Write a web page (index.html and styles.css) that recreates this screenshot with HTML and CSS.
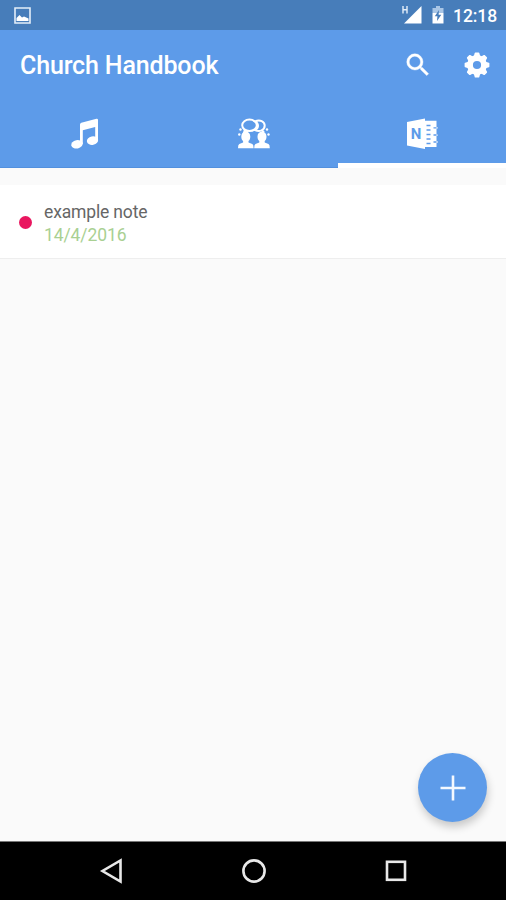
FILE: index.html
```html
<!DOCTYPE html>
<html lang="en">
<head>
    <meta charset="UTF-8">
    <meta name="viewport" content="width=device-width, initial-scale=1.0">
    <title>Church Handbook</title>
    <link rel="stylesheet" href="styles.css">
</head>
<body>
    <div class="status-bar">
        <svg class="picture-icon" width="17" height="17" viewBox="0 0 17 17">
            <path d="M1 1h15v15H1z" fill="none" stroke="#e4eef9" stroke-width="1.6"/>
            <path d="M2.5 14v-3L5.500 8l2.500 2.500 2-1 4.500 2V14z" fill="#fff"/>
        </svg>
        <div class="status-right">
            <svg width="20" height="18" viewBox="0 0 20 18">
                <path d="M2 0v7.500M6 0v7.500M2 3.700h4" stroke="#e4eef9" stroke-width="1.4"/>
                <path d="M20.500 0v17.500H3z" fill="#fff"/>
            </svg>
            <svg class="battery-icon" width="12" height="18" viewBox="0 0 12 18">
                <path d="M4 0h4v2h3.500v5H.5V2H4z" fill="#a9c6e6"/>
                <path d="M.5 7h11v10.500H.5z" fill="#fff"/>
                <path d="M7 4L2.800 10.200h2.600L5 15l4.300-6.200H6.600z" fill="#477dba"/>
            </svg>
            <span class="clock">12:18</span>
        </div>
    </div>

    <header class="header">
        <div class="toolbar">
            <h1>Church Handbook</h1>
            <div class="actions">
                <svg width="30" height="30" viewBox="0 0 24 24">
                    <path fill="#fff" stroke="#fff" stroke-width=".3" d="M15.5 14h-.79l-.28-.27A6.47 6.47 0 0 0 16 9.5 6.5 6.5 0 1 0 9.5 16c1.61 0 3.09-.59 4.23-1.57l.27.28v.79l5 4.99L20.49 19l-4.99-5zm-6 0a4.5 4.5 0 1 1 0-9 4.5 4.5 0 0 1 0 9z"/>
                </svg>
                <svg width="30" height="30" viewBox="-15 -15 30 30">
                    <g fill="#fff">
                        <circle r="7" fill="none" stroke="#fff" stroke-width="5.8"/>
                        <path id="tooth" d="M-3.300-8.500l1-3.400q.2-.5.7-.5h3.200q.5 0 .7.500l1 3.400z"/>
                        <use href="#tooth" transform="rotate(45)"/>
                        <use href="#tooth" transform="rotate(90)"/>
                        <use href="#tooth" transform="rotate(135)"/>
                        <use href="#tooth" transform="rotate(180)"/>
                        <use href="#tooth" transform="rotate(225)"/>
                        <use href="#tooth" transform="rotate(270)"/>
                        <use href="#tooth" transform="rotate(315)"/>
                    </g>
                </svg>
            </div>
        </div>
        <nav class="tabs">
            <div class="tab">
                <svg width="28" height="32" viewBox="0 0 28 32">
                    <path d="M9 8V6.500q0-1.300 1.300-1.700L25.500.8q1.500-.3 1.500 1.200v20h-2.800V9L11.800 12.200V26H9z" fill="#fff"/>
                    <ellipse cx="6" cy="26.300" rx="5.800" ry="4.200" transform="rotate(-12 6 26.300)" fill="#fff"/>
                    <ellipse cx="21.500" cy="22.600" rx="5.700" ry="4.200" transform="rotate(-12 21.500 22.600)" fill="#fff"/>
                </svg>
            </div>
            <div class="tab">
                <svg width="32" height="32" viewBox="0 0 32 32">
                    <g fill="none" stroke="#fff" stroke-width="2">
                        <ellipse cx="11.500" cy="7.300" rx="7.300" ry="5.800"/>
                        <path d="M17 3.300c5-2.300 9.700.2 9.700 4.200 0 4.700-5 7-9.700 4.600 4-2.500 4-6.500 0-8.800z"/>
                        <path d="M7 11.500l-1 3 4-1M23.500 12l2.500 2.500"/>
                    </g>
                    <g fill="#fff">
                        <path id="person" d="M3.300 18.500c0-3 1.800-4.700 4.500-4.700s4.500 1.700 4.500 4.700c0 2-.6 3.500-1.800 4.500v1.500l3.800 1.500q1.300.6 1.300 4.200H0q0-3.600 1.300-4.200L5.100 24.500V23c-1.200-1-1.800-2.500-1.800-4.500z"/>
                        <use href="#person" x="16.200"/>
                        <circle cx="2.500" cy="11.500" r="1.200"/>
                        <circle cx="1.300" cy="16.500" r="1.200"/>
                        <circle cx="29" cy="11.500" r="1.200"/>
                        <circle cx="30.500" cy="16.500" r="1.200"/>
                    </g>
                </svg>
            </div>
            <div class="tab active">
                <svg width="32" height="32" viewBox="0 0 32 32">
                    <path d="M18 2.800h12.500v6.400h1.200v1.400h-1.200v5.800h1.200v1.400h-1.200v5.500h1.200v1.400h-1.200v4.200H18z" fill="#fff"/>
                    <path d="M20.500 7.500h4M20.500 12h4M20.500 16.500h4M20.500 21h4M20.500 25.500h4M27.500 9.800h3M27.500 17h3M27.500 24h3" stroke="#5d9be9" stroke-width="1.3"/>
                    <path d="M1 4L19 .5v30.500L1 27.500z" fill="#fff"/>
                    <text class="notebook-letter" x="10" y="21.300">N</text>
                </svg>
            </div>
        </nav>
    </header>

    <main class="content">
        <div class="note">
            <span class="dot"></span>
            <div class="note-text">
                <div class="note-title">example note</div>
                <div class="note-date">14/4/2016</div>
            </div>
        </div>
        <div class="add-btn">
            <svg width="26" height="26" viewBox="0 0 26 26">
                <path d="M13 .5v25M.5 13h25" stroke="#f4f9ff" stroke-width="2.6"/>
            </svg>
        </div>
    </main>

    <footer class="nav-bar">
        <svg width="24" height="26" viewBox="0 0 24 26">
            <path d="M21.500 2.500v21L3.500 13z" fill="none" stroke="#e8e8e8" stroke-width="2.6"/>
        </svg>
        <svg width="24" height="26" viewBox="0 0 24 26">
            <circle cx="12" cy="13" r="10.600" fill="none" stroke="#e8e8e8" stroke-width="2.6"/>
        </svg>
        <svg width="24" height="26" viewBox="0 0 24 26">
            <rect x="2" y="3.800" width="18" height="18" fill="none" stroke="#e8e8e8" stroke-width="2.6"/>
        </svg>
    </footer>
</body>
</html>
```
FILE: styles.css
```css
* {
    box-sizing: border-box;
}

body {
    font-family: Roboto, sans-serif;
    margin: 0;
    height: 900px;
    display: flex;
    flex-direction: column;
    background-color: #fafafa;
    overflow: hidden;
}

svg {
    display: block;
    overflow: visible;
}

.status-bar {
    height: 30px;
    padding: 0 9px 0 14px;
    display: flex;
    align-items: center;
    justify-content: space-between;
    background-color: #477dba;
}

.status-right {
    display: flex;
    align-items: center;
}

.battery-icon {
    margin-left: 11px;
}

.clock {
    margin-left: 9px;
    color: #fff;
    font-size: 17.5px;
    font-weight: 500;
    letter-spacing: -0.1px;
    line-height: 30px;
    padding-top: 2px;
}

.header {
    height: 138px;
    background-color: #5d9be9;
    border-bottom: 1px solid #5290de;
}

.toolbar {
    height: 70px;
    padding: 0 14px 0 20px;
    display: flex;
    align-items: center;
    justify-content: space-between;
}

.toolbar h1 {
    margin: 0;
    padding-top: 2px;
    color: #fff;
    font-size: 25px;
    font-weight: 500;
    letter-spacing: -0.15px;
    line-height: 30px;
}

.actions {
    display: flex;
    gap: 29px;
}

.tabs {
    height: 68px;
    display: grid;
    grid-template-columns: 169px 169px 168px;
}

.tab {
    display: flex;
    justify-content: center;
    padding-top: 18px;
}

.tab.active {
    border-bottom: 5px solid #fff;
}

.notebook-letter {
    font-size: 15px;
    font-weight: 700;
    text-anchor: middle;
    fill: #5d9be9;
}

.content {
    flex: 1;
    position: relative;
    padding-top: 17px;
}

.note {
    height: 74px;
    padding-left: 19px;
    display: flex;
    align-items: center;
    background-color: #fff;
    border-bottom: 1px solid #eee;
}

.dot {
    width: 13px;
    height: 13px;
    margin: 2px 12px 0 0;
    border-radius: 50%;
    background-color: #e9165f;
}

.note-text {
    padding-top: 4px;
    font-size: 17.5px;
    letter-spacing: -0.15px;
    line-height: 23px;
}

.note-title {
    color: #666;
}

.note-date {
    color: #a9d092;
    letter-spacing: -0.1px;
}

.add-btn {
    position: absolute;
    right: 19px;
    bottom: 19px;
    width: 69px;
    height: 69px;
    display: flex;
    align-items: center;
    justify-content: center;
    border-radius: 50%;
    background-color: #5d9be9;
    box-shadow: 1px 5px 8px rgba(0, 0, 0, 0.2);
}

.nav-bar {
    height: 59px;
    padding: 0 97px 0 99px;
    display: flex;
    align-items: center;
    justify-content: space-between;
    background-color: #000;
    border-top: 1px solid #777;
}
```
